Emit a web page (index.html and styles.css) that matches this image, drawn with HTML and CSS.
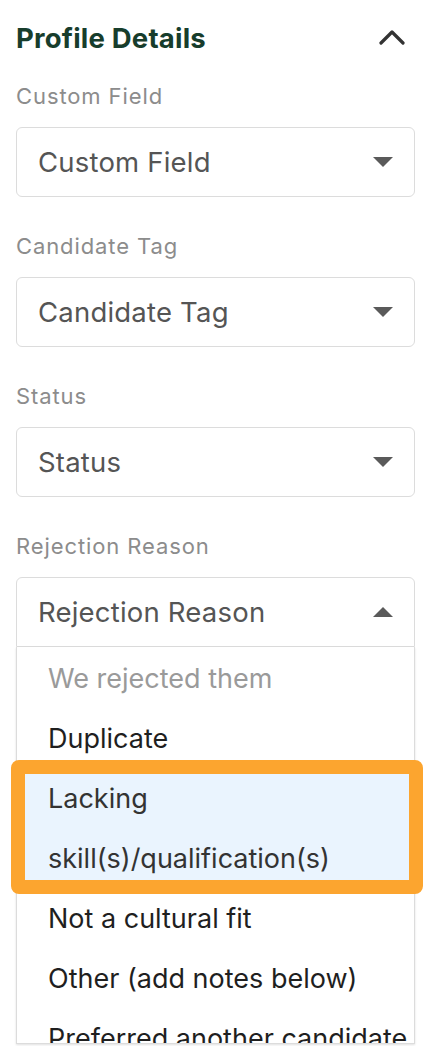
FILE: index.html
```html
<!DOCTYPE html>
<html lang="en">
<head>
<meta charset="utf-8">
<title>Profile Details</title>
<link rel="stylesheet" href="styles.css">
</head>
<body>
<div class="panel">
  <div class="header">
    <h2 class="title">Profile Details</h2>
    <svg class="chevron" width="26" height="16" viewBox="0 0 26 16" aria-hidden="true">
      <polyline points="2,14 13,3 24,14" fill="none" stroke="#333" stroke-width="3.2" stroke-linecap="round" stroke-linejoin="round"/>
    </svg>
  </div>

  <div class="field">
    <div class="label">Custom Field</div>
    <div class="select"><span class="value">Custom Field</span><span class="caret"></span></div>
  </div>

  <div class="field">
    <div class="label">Candidate Tag</div>
    <div class="select"><span class="value">Candidate Tag</span><span class="caret"></span></div>
  </div>

  <div class="field">
    <div class="label">Status</div>
    <div class="select"><span class="value">Status</span><span class="caret"></span></div>
  </div>

  <div class="field open">
    <div class="label">Rejection Reason</div>
    <div class="select select-open"><span class="value">Rejection Reason</span><span class="caret caret-up"></span></div>
    <div class="dropdown">
      <ul class="options">
        <li class="option placeholder">We rejected them</li>
        <li class="option">Duplicate</li>
        <li class="option active">Lacking<br>skill(s)/qualification(s)</li>
        <li class="option">Not a cultural fit</li>
        <li class="option">Other (add notes below)</li>
        <li class="option">Preferred another candidate</li>
      </ul>
      <div class="callout"></div>
    </div>
  </div>
</div>
</body>
</html>
```

FILE: styles.css
```css
* { box-sizing: border-box; }

html, body {
  margin: 0;
  padding: 0;
  background: #ffffff;
}

body {
  font-family: Inter, "Noto Sans", "Liberation Sans", sans-serif;
  overflow: hidden;
  height: 1046px;
}

.panel {
  padding: 22px 23px 0 16px;
}

.header {
  display: flex;
  justify-content: space-between;
  align-items: center;
  height: 32px;
  margin-bottom: 27px;
}

.title {
  margin: 0;
  font-size: 27.5px;
  line-height: 32px;
  font-weight: 700;
  color: #173d2c;
  letter-spacing: 0.2px;
}

.chevron {
  margin-right: 10px;
  margin-top: -2px;
}

.field {
  margin-bottom: 34px;
}

.label {
  font-size: 22px;
  line-height: 30px;
  color: #8c8c8c;
  margin-bottom: 16px;
  letter-spacing: 0.9px;
}

.select {
  height: 70px;
  border: 1px solid #dcdcdc;
  border-radius: 6px;
  display: flex;
  align-items: center;
  justify-content: space-between;
  padding: 0 21px 0 21px;
}

.value {
  font-size: 27.5px;
  color: #555555;
  letter-spacing: 0.2px;
}

.caret {
  width: 0;
  height: 0;
  border-left: 10px solid transparent;
  border-right: 10px solid transparent;
  border-top: 10px solid #5a5a5a;
}

.caret-up {
  border-top: 0;
  border-bottom: 10px solid #5a5a5a;
}

.select-open {
  border-radius: 6px 6px 0 0;
}

.dropdown {
  position: relative;
}

.options {
  list-style: none;
  margin: 0;
  padding: 2px 0 0 0;
  height: 397px;
  overflow: hidden;
  border: 1px solid #dcdcdc;
  border-top: 0;
  box-shadow: 0 1px 2px rgba(0, 0, 0, 0.12);
}

.option {
  font-size: 27px;
  line-height: 60px;
  padding-left: 31px;
  color: #1f1f1f;
  white-space: nowrap;
  letter-spacing: 0;
}

.placeholder {
  color: #9a9a9a;
}

.active {
  background: #eaf4fe;
  color: #333333;
}

.callout {
  position: absolute;
  left: -5px;
  top: 113px;
  width: 412px;
  height: 134px;
  border: 14px solid #fca52f;
  border-radius: 8px;
  pointer-events: none;
}
```
